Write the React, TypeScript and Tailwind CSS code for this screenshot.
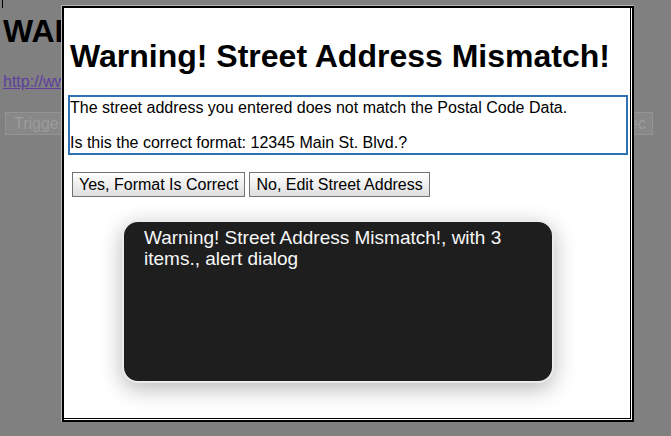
import React from "react";

export default function App() {
  return (
    <div
      className="relative h-[436px] w-full overflow-hidden bg-[#808080]"
      style={{ fontFamily: '"Liberation Sans", Arial, Helvetica, sans-serif' }}
    >
      {/* text caret */}
      <div className="absolute left-[2px] top-0 h-[8px] w-px bg-black" />

      {/* page content under overlay */}
      <div className="pl-[3px] pt-[13px]">
        <div className="w-[58px] overflow-hidden">
          <h1 className="whitespace-nowrap text-[32px] font-bold leading-[37px] text-black">
            WAI-ARIA
          </h1>
        </div>
        <div className="mt-[23px] w-[58px] overflow-hidden">
          <a className="block whitespace-nowrap text-[16px] leading-[18px] text-[#5e3f9e] underline">
            http://www.w3.org
          </a>
        </div>
        <div className="mt-[21px] flex items-start gap-[20px] pl-[2px]">
          <div className="flex h-[23px] w-[260px] items-center border border-[#949494] bg-[#888888] px-[8px] text-[16px] text-[#9c9c9c]">
            <span className="w-[46px] overflow-hidden whitespace-nowrap">Trigger</span>
          </div>
          <div className="flex h-[23px] w-[368px] items-center justify-end border border-[#949494] bg-[#888888] px-[6px] text-[16px] text-[#9c9c9c]">
            ec
          </div>
        </div>
      </div>

      {/* dialog */}
      <div className="absolute left-[61px] top-[5px] h-[417px] w-[573px] border-l border-t border-[#b8b8b8]">
        <div className="h-full w-full border-2 border-black bg-white pb-px pr-px">
          <div className="h-full w-full border-b border-r border-black pl-[4px] pt-[30px]">
            <h1 className="pl-[2px] text-[32px] font-bold leading-[37px] text-black">
              Warning! Street Address Mismatch!
            </h1>
            <div className="mt-[20px] w-[560px] border-2 border-[#2f72b3] pb-px pt-[2px] text-[16px] leading-[18px] text-black">
              <p>The street address you entered does not match the Postal Code Data.</p>
              <p className="mt-[17px]">Is this the correct format: 12345 Main St. Blvd.?</p>
            </div>
            <div className="ml-[4px] mt-[17px] flex gap-[4px]">
              <button className="h-[25px] border border-[#737373] bg-gradient-to-b from-[#ffffff] to-[#dedede] px-[6px] text-[16px] leading-[18px] text-black">
                Yes, Format Is Correct
              </button>
              <button className="h-[25px] border border-[#737373] bg-gradient-to-b from-[#ffffff] to-[#dedede] px-[6px] text-[16px] leading-[18px] text-black">
                No, Edit Street Address
              </button>
            </div>
          </div>
        </div>
      </div>

      {/* VoiceOver caption panel */}
      <div className="absolute left-[122px] top-[220px] h-[163px] w-[432px] rounded-[16px] border-2 border-[#ececec] bg-[#1e1e1e] pl-[20px] pr-[20px] pt-[5px] text-[19px] leading-[21px] text-[#f7f7f7] shadow-[0_6px_22px_rgba(0,0,0,0.28)]">
        Warning! Street Address Mismatch!, with 3 items., alert dialog
      </div>
    </div>
  );
}
